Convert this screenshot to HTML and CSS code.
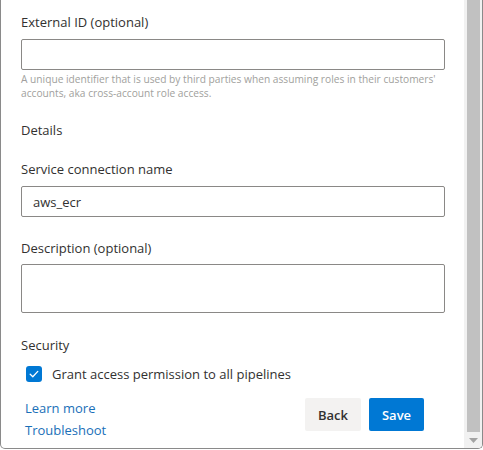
FILE: index.html
```html
<!DOCTYPE html>
<html>
<head>
<meta charset="utf-8">
<link rel="stylesheet" href="styles.css">
</head>
<body>
<div class="panel">
  <div class="content">
    <div class="label">External ID (optional)</div>
    <div class="input"></div>
    <div class="helper">A unique identifier that is used by third parties when assuming roles in their customers' accounts, aka cross-account role access.</div>
    <div class="section">Details</div>
    <div class="label label-gap">Service connection name</div>
    <div class="input"><span class="value">aws_ecr</span></div>
    <div class="label label-gap2">Description (optional)</div>
    <div class="input textarea"></div>
    <div class="section section-sec">Security</div>
    <div class="check-row">
      <span class="checkbox">
        <svg width="12" height="12" viewBox="0 0 12 12"><path d="M2.2 6.3 L4.8 8.8 L9.8 3.4" fill="none" stroke="#fff" stroke-width="1.3" stroke-linecap="round" stroke-linejoin="round"/></svg>
      </span>
      <span class="check-text">Grant access permission to all pipelines</span>
    </div>
    <div class="footer">
      <div class="links">
        <a class="link">Learn more</a>
        <a class="link">Troubleshoot</a>
      </div>
      <div class="buttons">
        <button class="btn btn-back">Back</button>
        <button class="btn btn-save">Save</button>
      </div>
    </div>
  </div>
  <div class="scrollbar">
    <div class="thumb"></div>
    <div class="arrow"><svg width="9" height="5" viewBox="0 0 9 5"><path d="M0 0 H9 L4.5 5 Z" fill="#a3a3a3"/></svg></div>
  </div>
</div>
</body>
</html>
```

FILE: styles.css
```css
html, body {
  margin: 0;
  padding: 0;
  background: #ffffff;
}
body {
  width: 483px;
  height: 450px;
  overflow: hidden;
  font-family: "Open Sans", "Noto Sans", sans-serif;
  color: #323130;
}
.panel {
  display: flex;
  width: 483px;
  height: 449px;
  box-sizing: border-box;
  border-left: 1px solid #8a8a8a;
  border-right: 1px solid #8a8a8a;
  border-bottom: 1px solid #8a8a8a;
  border-radius: 0 0 5px 5px;
  overflow: hidden;
  background: #fff;
}
.content {
  flex: 1;
  padding: 12px 19px 0 20px;
  display: flex;
  flex-direction: column;
}
.label, .section {
  font-size: 13px;
  line-height: 20px;
  height: 20px;
}
.label-gap { margin-top: 19px; }
.label-gap2 { margin-top: 21px; }
.input {
  margin-top: 7px;
  height: 31px;
  box-sizing: border-box;
  border: 1px solid #8a8886;
  border-radius: 2px;
  display: flex;
  align-items: center;
  padding-left: 11px;
  font-size: 13px;
}
.textarea { height: 49px; margin-top: 6px; }
.helper {
  margin-top: 2px;
  font-size: 10.2px;
  line-height: 14px;
  color: #a19f9d;
}
.section { margin-top: 20px; }
.section-sec { margin-top: 22px; }
.check-row {
  margin-top: 9px;
  display: flex;
  align-items: center;
  height: 20px;
  padding-left: 5px;
}
.checkbox {
  width: 16px;
  height: 16px;
  border-radius: 3px;
  background: #0078d4;
  display: flex;
  align-items: center;
  justify-content: center;
}
.check-text {
  margin-left: 10px;
  font-size: 13px;
}
.footer {
  margin-top: 14px;
  display: flex;
  justify-content: space-between;
  align-items: flex-start;
  padding-left: 4px;
  padding-right: 21px;
}
.links {
  display: flex;
  flex-direction: column;
}
.link {
  font-size: 13px;
  line-height: 22px;
  margin-top: -1px;
  color: #1a6fb8;
}
.link + .link { margin-top: 0; }
.buttons {
  display: flex;
  gap: 8px;
}
.btn {
  height: 33px;
  border: none;
  border-radius: 2px;
  font-family: "Open Sans", "Noto Sans", sans-serif;
  font-size: 13px;
  font-weight: 600;
  padding: 0;
}
.btn-back {
  width: 56px;
  background: #f3f2f1;
  color: #323130;
}
.btn-save {
  width: 55px;
  background: #0078d4;
  color: #fff;
}
.scrollbar {
  width: 18px;
  background: #f1f1f1;
  display: flex;
  flex-direction: column;
  align-items: center;
  padding-left: 1px;
  box-sizing: border-box;
}
.thumb {
  width: 13px;
  height: 432px;
  background: #c1c1c1;
  margin-left: -1px;
}
.arrow {
  height: 16px;
  display: flex;
  align-items: center;
  justify-content: center;
}
```
